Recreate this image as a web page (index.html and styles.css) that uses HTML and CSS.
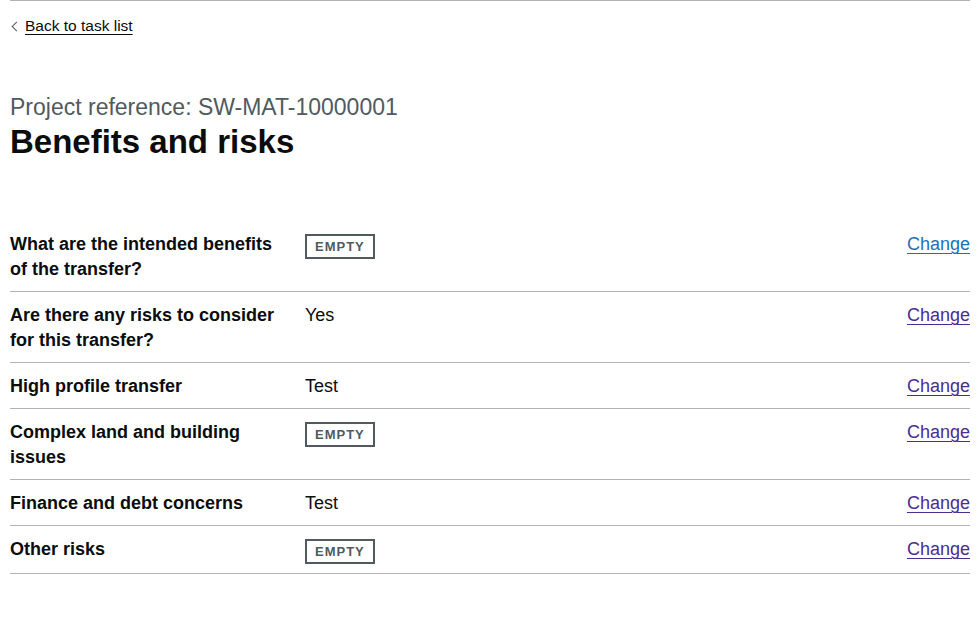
FILE: index.html
```html
<!DOCTYPE html>
<html lang="en">
<head>
<meta charset="utf-8">
<title>Benefits and risks</title>
<link rel="stylesheet" href="styles.css">
</head>
<body>
<div class="container">
  <a class="back-link" href="#">Back to task list</a>
  <main class="main">
    <span class="caption">Project reference: SW-MAT-10000001</span>
    <h1 class="heading">Benefits and risks</h1>
    <dl class="summary">
      <div class="row">
        <dt class="key">What are the intended benefits of the transfer?</dt>
        <dd class="value"><strong class="tag">Empty</strong></dd>
        <dd class="actions"><a class="link link-blue" href="#">Change</a></dd>
      </div>
      <div class="row">
        <dt class="key">Are there any risks to consider for this transfer?</dt>
        <dd class="value">Yes</dd>
        <dd class="actions"><a class="link" href="#">Change</a></dd>
      </div>
      <div class="row">
        <dt class="key">High profile transfer</dt>
        <dd class="value">Test</dd>
        <dd class="actions"><a class="link" href="#">Change</a></dd>
      </div>
      <div class="row">
        <dt class="key">Complex land and building issues</dt>
        <dd class="value"><strong class="tag">Empty</strong></dd>
        <dd class="actions"><a class="link" href="#">Change</a></dd>
      </div>
      <div class="row">
        <dt class="key">Finance and debt concerns</dt>
        <dd class="value">Test</dd>
        <dd class="actions"><a class="link" href="#">Change</a></dd>
      </div>
      <div class="row">
        <dt class="key">Other risks</dt>
        <dd class="value"><strong class="tag">Empty</strong></dd>
        <dd class="actions"><a class="link" href="#">Change</a></dd>
      </div>
    </dl>
  </main>
</div>
</body>
</html>
```

FILE: styles.css
```css
html, body {
  margin: 0;
  padding: 0;
  background: #ffffff;
}

body {
  font-family: "Liberation Sans", Arial, sans-serif;
  color: #0b0c0c;
  -webkit-font-smoothing: antialiased;
}

.container {
  width: 960px;
  margin-left: 10px;
  border-top: 1px solid #b1b4b6;
  display: flex;
  flex-direction: column;
  align-items: flex-start;
}

.back-link {
  display: inline-flex;
  align-items: center;
  gap: 5px;
  margin-top: 15px;
  margin-bottom: 15px;
  font-size: 15.5px;
  line-height: 20px;
  color: #0b0c0c;
  text-decoration: underline;
  text-decoration-thickness: 1px;
  text-underline-offset: 3px;
}

.back-link::before {
  content: "";
  display: inline-block;
  width: 6px;
  height: 6px;
  margin-left: 3px;
  border-style: solid;
  border-color: #505a5f;
  border-width: 1px 1px 0 0;
  transform: rotate(225deg);
}

.main {
  align-self: stretch;
  padding-top: 41px;
}

.caption {
  display: block;
  font-size: 23px;
  line-height: 30px;
  color: #505a5f;
  margin-bottom: 0;
}

.heading {
  margin: 0 0 59px;
  font-size: 33px;
  line-height: 40px;
  font-weight: 700;
}

.summary {
  margin: 0;
  padding: 0;
  font-size: 18px;
  line-height: 25px;
}

.row {
  display: flex;
  border-bottom: 1px solid #b1b4b6;
}

.key,
.value,
.actions {
  margin: 0;
  padding: 11px 0 9px;
}

.key {
  width: 295px;
  flex: none;
  padding-right: 20px;
  box-sizing: border-box;
  font-weight: 700;
}

.value {
  flex: 1;
}

.actions {
  flex: none;
  text-align: right;
}

.link {
  color: #4c2c92;
  text-decoration: underline;
  text-decoration-thickness: 1px;
  text-underline-offset: 3px;
}

.link-blue {
  color: #1d70b8;
}

.tag {
  display: inline-block;
  margin-top: 2px;
  padding: 4px 8px 3px 8px;
  border: 2px solid #505a5f;
  font-size: 13px;
  line-height: 14px;
  font-weight: 700;
  letter-spacing: 1px;
  text-transform: uppercase;
  color: #505a5f;
  vertical-align: top;
}
```
